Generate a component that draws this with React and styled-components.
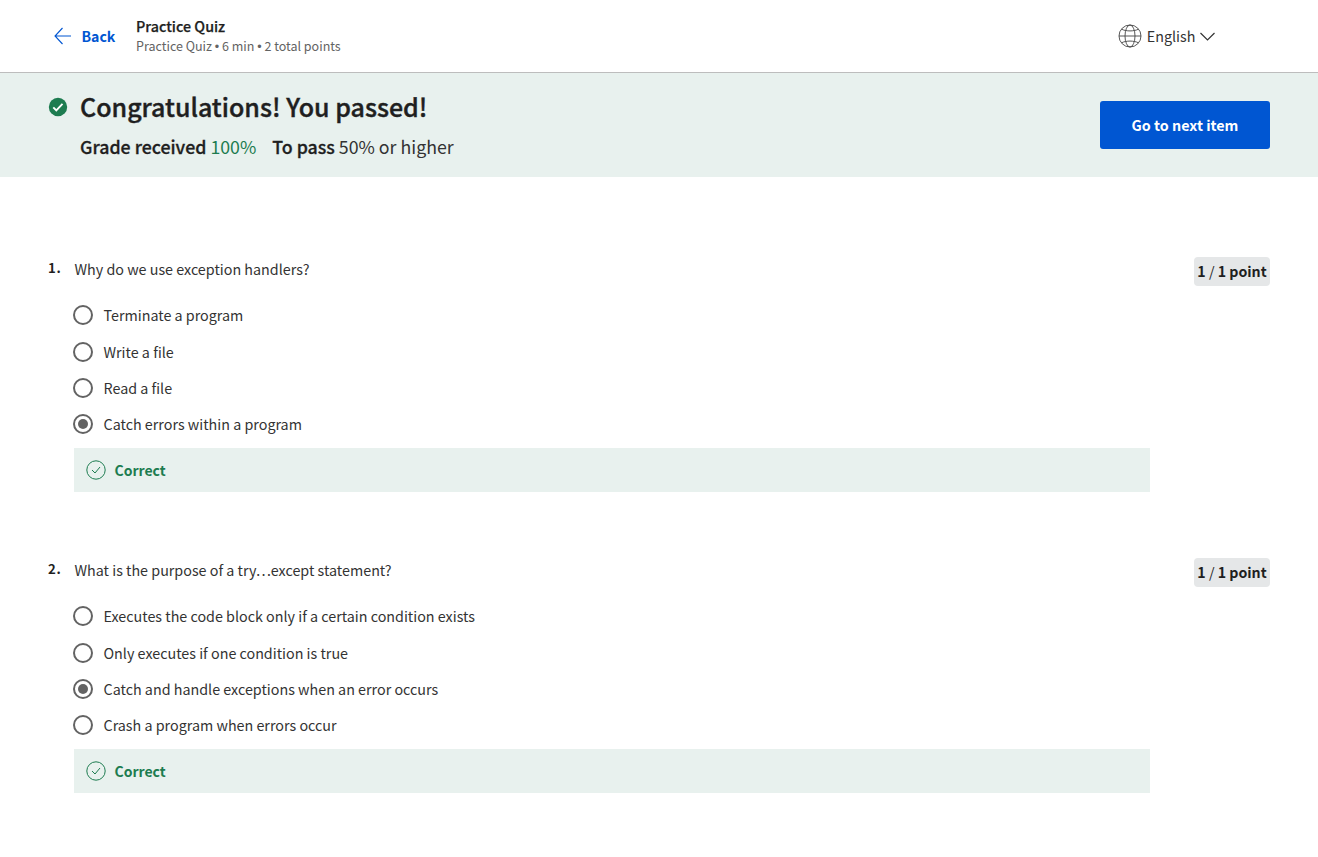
import React from "react";
import styled, { createGlobalStyle } from "styled-components";

const Global = createGlobalStyle`
  * { box-sizing: border-box; }
  body { margin: 0; background: #fff; color: #1f1f1f; font-family: "Source Sans Pro", "Noto Sans CJK SC", sans-serif; font-size: 14.32px; }
`;

const Header = styled.header`
  height: 73px;
  border-bottom: 1px solid #bdbdbd;
  display: flex;
  align-items: center;
  padding: 0 103px 0 54px;
`;
const Back = styled.a`
  display: flex;
  align-items: center;
  gap: 10.5px;
  width: 82px;
  color: #0056d2;
  font-size: 14.1px;
  font-weight: 700;
  line-height: 20px;
  white-space: nowrap;
`;
const Titles = styled.div`
  flex: 1;
`;
const Title = styled.div`
  font-weight: 500;
  line-height: 20px;
  -webkit-text-stroke: 0.25px currentColor;
`;
const Meta = styled.div`
  font-size: 12.53px;
  line-height: 20px;
  color: #636363;
`;
const Dot = styled.span`
  font-family: "Liberation Sans", sans-serif;
  font-size: 12.5px;
  line-height: 1;
`;
const Language = styled.div`
  display: flex;
  align-items: center;
  gap: 4.6px;
  line-height: 20px;
  color: #333;
`;

const Banner = styled.section`
  height: 104px;
  background: #e8f1ee;
  display: flex;
  align-items: flex-start;
  padding: 16px 48px 0;
`;
const BannerIcon = styled.span`
  display: flex;
  width: 32px;
  padding-top: 8px;
`;
const BannerText = styled.div`
  flex: 1;
`;
const Heading = styled.h1`
  margin: 0;
  font-size: 25px;
  font-weight: 500;
  line-height: 35px;
  -webkit-text-stroke: 0.4px currentColor;
`;
const Grade = styled.div`
  margin-top: 8px;
  font-size: 17.75px;
  line-height: 28px;
  display: flex;
  gap: 16px;
  color: #333;
  b { font-weight: 500; color: #1f1f1f; -webkit-text-stroke: 0.3px currentColor; }
  em { font-style: normal; color: #1d7c50; }
`;
const NextButton = styled.button`
  width: 170px;
  height: 48px;
  margin-top: 12px;
  border: 0;
  border-radius: 3px;
  padding: 0 0 2px;
  background: #0056d2;
  color: #fff;
  font: inherit;
  font-weight: 700;
`;

const Questions = styled.main`
  display: flex;
  flex-direction: column;
  gap: 66px;
  padding: 80px 48px 0;
`;
const Question = styled.section`
  display: grid;
  grid-template-columns: 26px 1076px 1fr;
  align-items: start;
`;
const Num = styled.div`
  font-size: 13.2px;
  font-weight: 700;
  line-height: 22px;
  letter-spacing: 0.7px;
`;
const Prompt = styled.div`
  line-height: 24px;
  margin-bottom: 22.4px;
  padding-left: 0.5px;
  color: #333;
`;
const Option = styled.label`
  display: flex;
  align-items: center;
  height: 24px;
  line-height: 20px;
  margin: 0 0 12.3px -1px;
  gap: 10.5px;
  color: #333;
`;
const Radio = styled.span`
  width: 20px;
  height: 20px;
  border: 2px solid #636363;
  border-radius: 50%;
  display: grid;
  place-items: center;
  &::after {
    content: "";
    width: 10px;
    height: 10px;
    border-radius: 50%;
    background: ${(p) => (p.$on ? "#636363" : "transparent")};
  }
`;
const Correct = styled.div`
  height: 44px;
  margin-top: -0.6px;
  background: #e8f1ee;
  display: flex;
  align-items: center;
  gap: 8.5px;
  padding-left: 12px;
  color: #1d7c50;
  font-size: 14px;
  font-weight: 700;
  line-height: 20px;
`;
const Points = styled.div`
  justify-self: end;
  width: 76px;
  height: 29px;
  border-radius: 4px;
  background: #e5e7e8;
  text-align: center;
  line-height: 29px;
  font-weight: 700;
  font-size: 14.2px;
  white-space: nowrap;
`;
const Slash = styled.span`
  font-weight: 400;
`;

const questions = [
  {
    text: "Why do we use exception handlers?",
    options: ["Terminate a program", "Write a file", "Read a file", "Catch errors within a program"],
    chosen: 3,
  },
  {
    text: "What is the purpose of a try…except statement?",
    options: [
      "Executes the code block only if a certain condition exists",
      "Only executes if one condition is true",
      "Catch and handle exceptions when an error occurs",
      "Crash a program when errors occur",
    ],
    chosen: 2,
  },
];

export default function App() {
  return (
    <>
      <Global />
      <Header>
        <Back>
          <svg width="17" height="18" viewBox="0 0 17 18" fill="none" stroke="#0056d2" strokeWidth="1.1"><path d="M17 9H1M8.5 1L1 9l7.5 8" /></svg>
          Back
        </Back>
        <Titles>
          <Title>Practice Quiz</Title>
          <Meta>Practice Quiz <Dot>•</Dot> 6 min <Dot>•</Dot> 2 total points</Meta>
        </Titles>
        <Language>
          <svg width="24" height="24" viewBox="0 0 24 24" fill="none" stroke="#444" strokeWidth="0.9"><circle cx="12" cy="12" r="11" /><ellipse cx="12" cy="12" rx="5" ry="11" /><path d="M1 12h22M3.6 5.2C8 7.5 16 7.5 20.4 5.2M3.6 18.8C8 16.5 16 16.5 20.4 18.8" /></svg>
          English
          <svg width="15" height="9" viewBox="0 0 15 9" fill="none" stroke="#333" strokeWidth="1.2"><path d="M.5 1l7 7 7-7" /></svg>
        </Language>
      </Header>
      <Banner>
        <BannerIcon>
          <svg width="20" height="20" viewBox="0 0 20 20"><circle cx="10" cy="10" r="9.2" fill="#1d7c50" /><path d="M5.3 10.4l3 3 6.2-6.6" fill="none" stroke="#fff" strokeWidth="1.9" /></svg>
        </BannerIcon>
        <BannerText>
          <Heading>Congratulations! You passed!</Heading>
          <Grade>
            <span><b>Grade received</b> <em>100%</em></span>
            <span><b>To pass</b> 50% or higher</span>
          </Grade>
        </BannerText>
        <NextButton>Go to next item</NextButton>
      </Banner>
      <Questions>
        {questions.map((q, i) => (
          <Question key={q.text}>
            <Num>{i + 1}.</Num>
            <div>
              <Prompt>{q.text}</Prompt>
              {q.options.map((o, j) => (
                <Option key={o}><Radio $on={j === q.chosen} />{o}</Option>
              ))}
              <Correct>
                <svg width="20" height="20" viewBox="0 0 20 20" fill="none" stroke="#1d7c50"><circle cx="10" cy="10" r="9.2" /><path d="M6 10l3 3 5-6" /></svg>
                Correct
              </Correct>
            </div>
            <Points>1 <Slash>/</Slash> 1 point</Points>
          </Question>
        ))}
      </Questions>
    </>
  );
}
